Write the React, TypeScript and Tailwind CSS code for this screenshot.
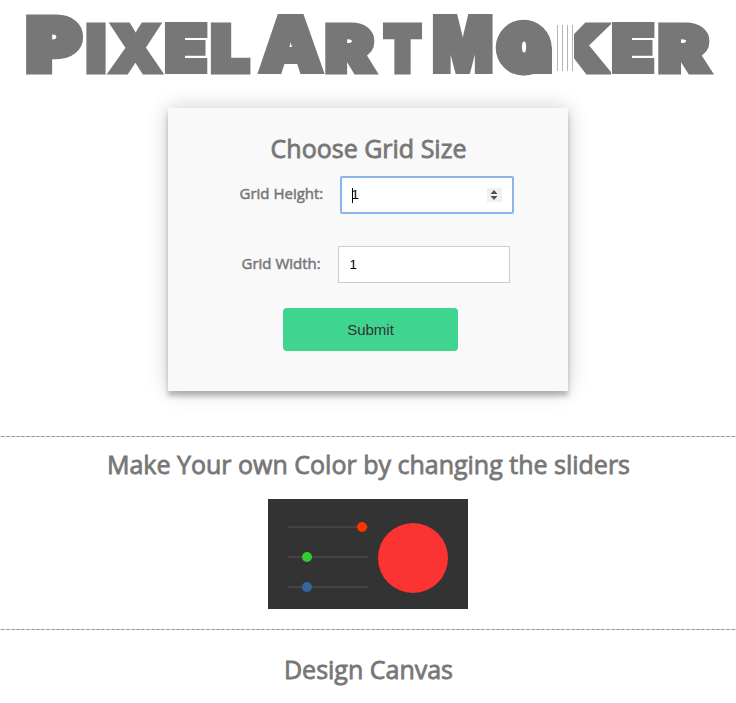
type Glyph = { ch: string; x: number; w: number; s: number; big?: boolean };

const glyphs: Glyph[] = [
  { ch: "P", x: 27.5, w: 52.5, s: 9, big: true },
  { ch: "I", x: 87, w: 18, s: 7 },
  { ch: "X", x: 110, w: 51, s: 5 },
  { ch: "E", x: 165, w: 42, s: 6 },
  { ch: "L", x: 211.5, w: 37, s: 7 },
  { ch: "A", x: 260, w: 62, s: 6, big: true },
  { ch: "R", x: 326, w: 47, s: 7 },
  { ch: "T", x: 384.5, w: 36, s: 7 },
  { ch: "M", x: 432.5, w: 60.5, s: 6, big: true },
];

const tail: Glyph[] = [
  { ch: "E", x: 612, w: 42, s: 6 },
  { ch: "R", x: 659, w: 49, s: 7 },
];

// The outline thickens each letter, so the cap height is reduced by its width.
function Letter({ ch, x, w, s, big }: Glyph) {
  return (
    <text
      x={x}
      y={74 - s / 2}
      textLength={w}
      lengthAdjust="spacingAndGlyphs"
      fontSize={((big ? 60 : 52) - s) / 0.727}
      strokeWidth={s}
    >
      {ch}
    </text>
  );
}

function Logo() {
  return (
    <svg
      width="736"
      height="108"
      viewBox="0 0 736 108"
      className="block shrink-0 overflow-visible fill-[#777] stroke-[#777] font-['Inter',sans-serif] font-black"
      role="heading"
      aria-level={1}
    >
      {glyphs.map((g) => (
        <Letter key={g.x} {...g} />
      ))}
      <clipPath id="bowl">
        <circle cx="523.7" cy="47.7" r="28" />
        <rect x="524" y="47" width="28" height="27" />
      </clipPath>
      <g clipPath="url(#bowl)">
        <text
          x={500}
          y={66}
          textLength={50}
          lengthAdjust="spacingAndGlyphs"
          fontSize={70}
          strokeWidth={18}
          className="font-normal [font-feature-settings:'cv11']"
        >
          a
        </text>
      </g>
      <clipPath id="arm">
        <rect x="574" y="0" width="37" height="100" />
      </clipPath>
      <g clipPath="url(#arm)">
        <Letter ch="K" x={547} w={62} s={5} />
      </g>
      <path d="M557.5 25v46M562.5 25v46M567.5 25v46M572.5 25v46" stroke="#b5b5b5" strokeWidth="1" />
      {tail.map((g) => (
        <Letter key={g.x} {...g} />
      ))}
    </svg>
  );
}

function Heading({ children, className = "" }: { children: string; className?: string }) {
  return (
    <h2
      className={`text-center text-[25px] leading-[36px] whitespace-nowrap [-webkit-text-stroke:0.8px_#777] ${className}`}
    >
      {children}
    </h2>
  );
}

function Channel({ thumb, className }: { thumb: string; className: string }) {
  return (
    <div className="flex h-[10px] w-20 items-center bg-[linear-gradient(#444,#444)] bg-[length:100%_2px] bg-center bg-no-repeat">
      <span className={`size-[10px] rounded-full ${thumb} ${className}`} />
    </div>
  );
}

function Divider({ className }: { className: string }) {
  return (
    <div
      className={`h-px w-full shrink-0 bg-[repeating-linear-gradient(90deg,#c8c8c8_0_2px,#8a8a8a_2px_4px,#c8c8c8_4px_5px)] ${className}`}
    />
  );
}

export default function App() {
  return (
    <div className="flex h-[703px] w-[736px] flex-col items-center overflow-hidden bg-white font-['Open_Sans',sans-serif] text-[#777]">
      <Logo />
      <form className="flex h-[283px] w-[400px] shrink-0 flex-col items-center bg-[#f9f9f9] pt-[22px] shadow-[0_0_20px_rgba(0,0,0,0.2),0_5px_5px_rgba(0,0,0,0.24)]">
        <Heading className="ml-px">Choose Grid Size</Heading>
        <div className="mt-[10px] ml-4 flex h-[38px] w-[275px] items-center justify-between">
          <span className="-mt-1 ml-px text-[15px] leading-5 whitespace-nowrap [-webkit-text-stroke:0.5px_#777]">Grid Height:</span>
          <div className="flex h-[38px] w-[174px] items-center rounded-[2px] border-2 border-[#8db2f0] bg-white pr-[10px] pl-[10px] font-['Liberation_Sans',sans-serif] text-[13.33px] text-black">
            <span className="h-[15px] w-px bg-black" />
            <span className="-ml-px grow">1</span>
            <span className="flex h-[14px] w-[15px] flex-col items-center justify-center gap-[2px] bg-[#f0f0f0]">
              <svg width="8" height="10" viewBox="0 0 8 10" fill="#505050">
                <path d="M4 0L7.5 4h-7zM4 10L.5 6h7z" />
              </svg>
            </span>
          </div>
        </div>
        <div className="mt-[32px] ml-[14px] flex h-[37px] w-[269px] items-center justify-between">
          <span className="-mt-1 ml-px text-[15px] leading-5 whitespace-nowrap [-webkit-text-stroke:0.5px_#777]">Grid Width:</span>
          <div className="flex h-[37px] w-[172px] items-center border border-[#ccc] bg-white pl-[11px] font-['Liberation_Sans',sans-serif] text-[13.33px] text-black">
            1
          </div>
        </div>
        <button
          type="button"
          className="mt-[25px] ml-[5px] h-[43px] w-[175px] rounded bg-[#3fd48f] pt-px font-['Liberation_Sans',sans-serif] text-[15px] text-[#333]"
        >
          Submit
        </button>
      </form>
      <Divider className="mt-[45px]" />
      <Heading className="mt-[9px] ml-px">Make Your own Color by changing the sliders</Heading>
      <div className="mt-[17px] flex h-[110px] w-[200px] shrink-0 bg-[#333] pl-5">
        <div className="flex flex-col gap-5 pt-[23px]">
          <Channel thumb="bg-[#ff3300]" className="ml-[69px]" />
          <Channel thumb="bg-[#33cc33]" className="ml-[14px]" />
          <Channel thumb="bg-[#336699]" className="ml-[14px]" />
        </div>
        <div className="mt-6 ml-[10px] size-[70px] rounded-full bg-[#fc3333]" />
      </div>
      <Divider className="mt-5" />
      <Heading className="mt-[21px] ml-px">Design Canvas</Heading>
    </div>
  );
}
